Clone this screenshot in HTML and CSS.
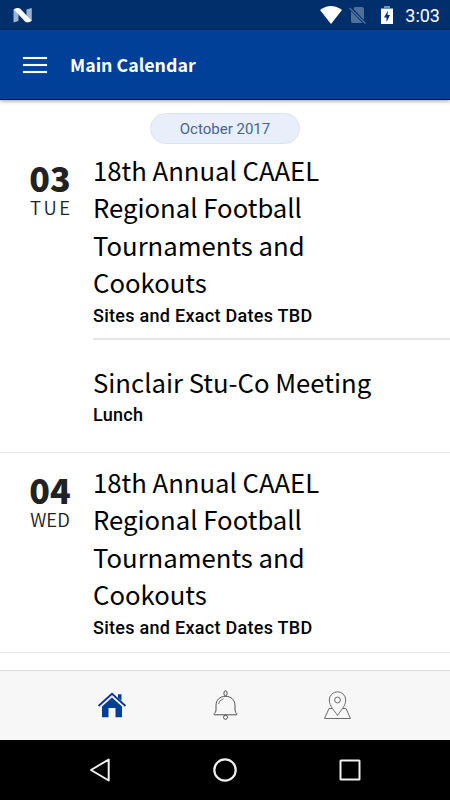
FILE: index.html
```html
<!DOCTYPE html>
<html lang="en">
<head>
  <meta charset="UTF-8">
  <meta name="viewport" content="width=device-width, initial-scale=1.0">
  <title>Main Calendar</title>
  <link rel="stylesheet" href="styles.css">
</head>
<body>

  <div class="status-bar">
    <svg class="n-logo" width="20" height="16" viewBox="0 0 20 16">
      <path d="M.5 1.500L5.500 0v13L.5 14.500zM13.500 1.500L18.800 0v13l-5.300 1.500z" fill="#9fb3cf"/>
      <path d="M.8 1.500Q4-.8 7 .6L18.500 12.500Q16 15.200 12.500 14z" fill="#fff"/>
    </svg>
    <div class="status-icons">
      <svg class="wifi" width="22" height="18" viewBox="0 0 22 18">
        <path d="M0 4Q11-4 22 4L11 18z" fill="#fff"/>
      </svg>
      <svg class="no-sim" width="17" height="18" viewBox="0 0 17 18">
        <path d="M5.500 1H13q2 0 2 2v11L4.500 3zM2 5l11.500 12H4q-2 0-2-2z" fill="#50709b"/>
        <path d="M.5 2l16 15.500" stroke="#50709b" stroke-width="1.400"/>
      </svg>
      <svg class="battery" width="12" height="18" viewBox="0 0 12 18">
        <path d="M3 0h6v2h3v2H0V2h3z" fill="#6f90b5"/>
        <path d="M0 3h12v15H0z" fill="#fff"/>
        <path d="M7 4.500L3 11.500h2.500V16L9 9H6.500z" fill="#002f6c"/>
      </svg>
      <span class="clock">3:03</span>
    </div>
  </div>

  <header class="app-header">
    <button class="menu-btn" aria-label="Menu">
      <span></span>
      <span></span>
      <span></span>
    </button>
    <h1>Main Calendar</h1>
  </header>

  <main class="calendar">
    <div class="month">October 2017</div>

    <section class="day">
      <div class="date">
        <span class="number">03</span>
        <span class="weekday tue">TUE</span>
      </div>
      <div class="events">
        <div class="event">
          <h2>18th Annual CAAEL<br>Regional Football<br>Tournaments and<br>Cookouts</h2>
          <p>Sites and Exact Dates TBD</p>
        </div>
        <div class="event">
          <h2>Sinclair Stu-Co Meeting</h2>
          <p>Lunch</p>
        </div>
      </div>
    </section>

    <section class="day">
      <div class="date">
        <span class="number">04</span>
        <span class="weekday">WED</span>
      </div>
      <div class="events">
        <div class="event">
          <h2>18th Annual CAAEL<br>Regional Football<br>Tournaments and<br>Cookouts</h2>
          <p>Sites and Exact Dates TBD</p>
        </div>
      </div>
    </section>
  </main>

  <nav class="tab-bar">
    <svg width="30" height="30" viewBox="0 0 30 30">
      <path d="M5 15.500L15 6.500l10 9v10.800h-6.500V17h-7v9.300H5z" fill="#003f98"/>
      <path d="M1.500 15L15 2.800 28.500 15" fill="none" stroke="#0a2fa8" stroke-width="1.800"/>
      <path d="M21 3.300h3.500v6.500L21 6.700z" fill="#003f98"/>
    </svg>
    <svg width="30" height="32" viewBox="0 0 30 32" fill="none" stroke="#4d4f52" stroke-width="1">
      <ellipse cx="15.500" cy="3.300" rx="1.600" ry="2.600"/>
      <path d="M6 20V15.500C6 10 10 6.300 15.500 6.300s9.500 3.700 9.500 9.200V20q0 2.500 1.800 3.500v1.300H4.200v-1.300Q6 22.500 6 20z"/>
      <path d="M8.500 14q.8-3.800 5-5.300" stroke-width=".8"/>
      <circle cx="15.500" cy="27.300" r="2"/>
    </svg>
    <svg width="30" height="32" viewBox="0 0 30 32" fill="none" stroke="#6b6b6b" stroke-width="1">
      <path d="M14.500 25.500C12 21 6.300 16.500 6.300 10a8.200 8.200 0 0 1 16.400 0C22.700 16.500 17 21 14.500 25.500z"/>
      <circle cx="14.500" cy="10" r="2.900"/>
      <path d="M9.500 18.500H6L1.500 28.500h26l-4.500-10h-3.500"/>
    </svg>
  </nav>

  <div class="system-nav">
    <svg width="26" height="26" viewBox="0 0 26 26" fill="none" stroke="#f0f0f0" stroke-width="2">
      <path d="M21.700 2.500v21L4 13z" stroke-linejoin="round"/>
    </svg>
    <svg width="26" height="26" viewBox="0 0 26 26" fill="none" stroke="#f0f0f0" stroke-width="2.200">
      <circle cx="13" cy="13" r="10.700"/>
    </svg>
    <svg width="26" height="26" viewBox="0 0 26 26" fill="none" stroke="#f0f0f0" stroke-width="2">
      <rect x="3.500" y="3.500" width="19" height="19" rx=".5"/>
    </svg>
  </div>

</body>
</html>
```

FILE: styles.css
```css
* {
  margin: 0;
  padding: 0;
  box-sizing: border-box;
}

body {
  font-family: 'Noto Sans CJK JP', 'Noto Sans', sans-serif;
  background: #fff;
  color: #000;
  height: 100vh;
  display: flex;
  flex-direction: column;
  overflow: hidden;
}

.status-bar {
  height: 30px;
  flex: none;
  background: #002f6c;
  display: flex;
  justify-content: space-between;
  padding: 0 10px 0 13px;
}

.n-logo {
  margin-top: 8px;
}

.status-icons {
  display: flex;
}

.wifi {
  margin: 6px 7px 0 0;
}

.no-sim {
  margin: 6px 15px 0 0;
}

.battery {
  margin: 6px 12px 0 0;
}

.clock {
  font-family: Roboto, sans-serif;
  font-size: 18px;
  line-height: 32px;
  color: #fff;
}

.app-header {
  height: 70px;
  flex: none;
  background: #004098;
  border-bottom: 1px solid #00106c;
  box-shadow: 0 1px 4px rgba(0, 0, 0, 0.4);
  display: flex;
  align-items: center;
  padding-left: 23px;
  gap: 23px;
  z-index: 1;
}

.menu-btn {
  width: 24px;
  background: none;
  border: none;
  display: flex;
  flex-direction: column;
  gap: 5px;
}

.menu-btn span {
  height: 2px;
  background: #fff;
  box-shadow: 0 0 1px rgba(255, 255, 255, 0.6);
}

h1 {
  font-size: 17.8px;
  font-weight: 700;
  color: #fff;
  padding-bottom: 2px;
}

.calendar {
  flex: 1;
  min-height: 0;
  overflow: hidden;
}

.month {
  width: 150px;
  height: 31px;
  margin: 13px auto 6.5px;
  border: 1px solid #d9e4f2;
  border-radius: 16px;
  background: #e9effa;
  color: #47658d;
  font: 15px/31px Roboto, sans-serif;
  text-align: center;
}

.day {
  display: flex;
  border-bottom: 1px solid #e5e5e5;
}

.day + .day {
  padding-top: 9.5px;
}

.date {
  width: 93px;
  padding: 8.5px 0 0 7px;
  display: flex;
  flex-direction: column;
  align-items: center;
  color: #222;
}

.number {
  font-size: 34px;
  font-weight: 900;
  line-height: 38px;
}

.weekday {
  font-size: 18.5px;
  font-weight: 350;
  line-height: 20px;
}

.tue {
  letter-spacing: 2.5px;
  margin-right: -2.5px;
}

.events {
  flex: 1;
}

.event {
  padding-bottom: 10.5px;
}

.event + .event {
  border-top: 2px solid #e5e5e5;
  padding: 23px 0 25.5px;
}

.event + .event p {
  margin-top: 1px;
}

.event:only-child {
  padding-bottom: 12.5px;
}

.event h2 {
  font-size: 25.7px;
  font-weight: 400;
  line-height: 37.5px;
}

.event p {
  margin-top: 2px;
  font: 500 18px/25px Roboto, sans-serif;
  letter-spacing: 0.28px;
}

.tab-bar {
  height: 70px;
  flex: none;
  background: #f7f7f7;
  border-top: 1px solid #ddd;
  display: flex;
  justify-content: center;
  align-items: center;
  gap: 83px;
}

.system-nav {
  height: 60px;
  flex: none;
  background: #000;
  display: flex;
  justify-content: center;
  align-items: center;
  gap: 99px;
}
```
